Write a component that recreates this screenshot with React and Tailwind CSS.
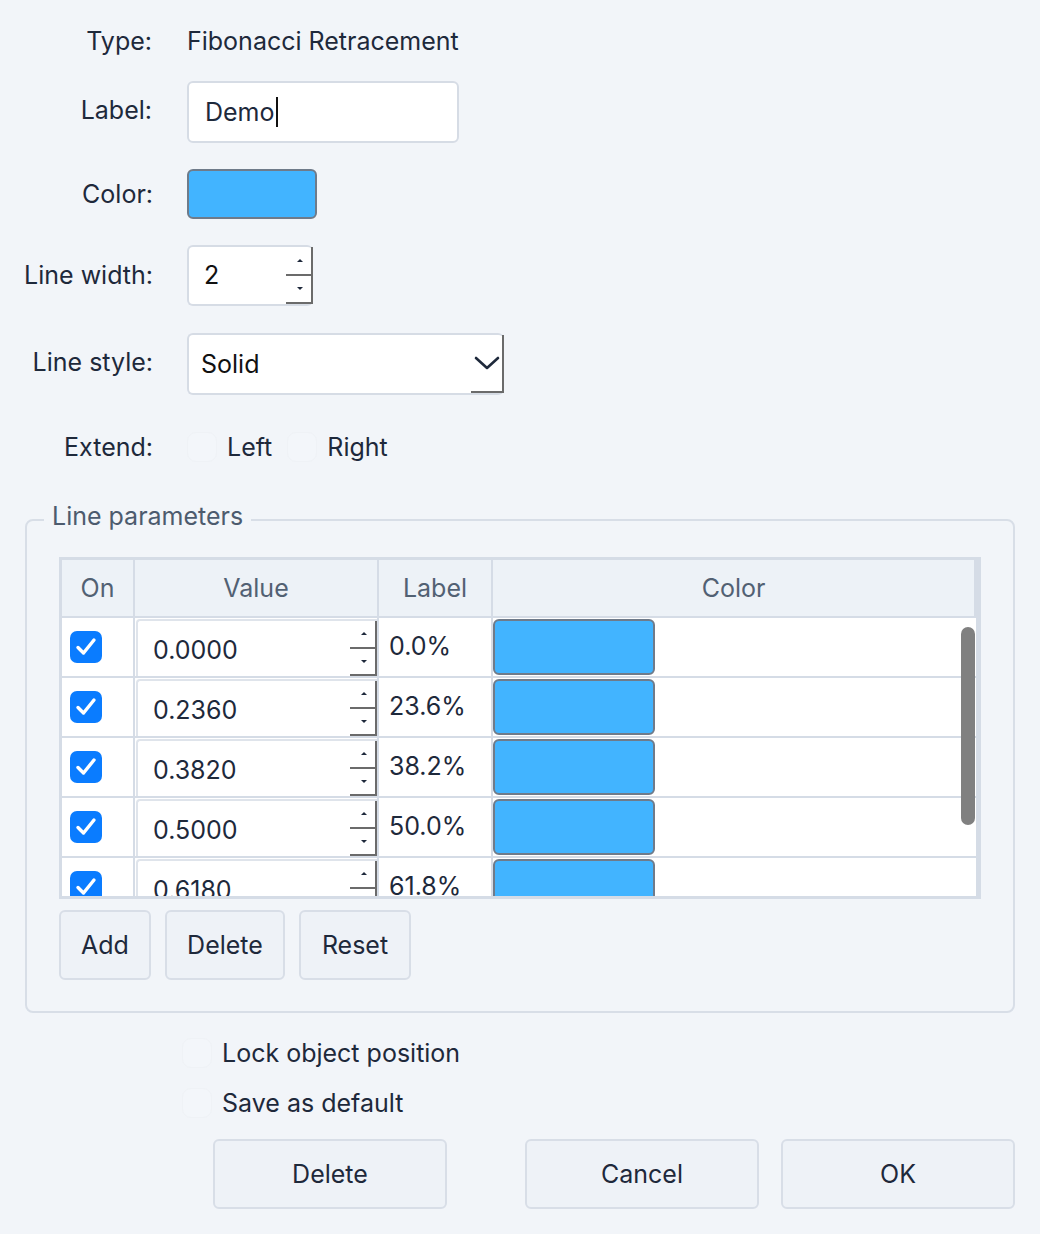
import React from "react";

function Arrow({ up }) {
  return up ? (
    <div className="h-0 w-0 border-x-[3px] border-b-[3px] border-x-transparent border-b-[#1e293b]" />
  ) : (
    <div className="h-0 w-0 border-x-[3px] border-t-[3px] border-x-transparent border-t-[#1e293b]" />
  );
}

function Spinner() {
  return (
    <div className="flex w-[27px] flex-col self-stretch border-r-2 border-[#6b6b6b]">
      <div className="flex flex-1 items-center justify-center pl-[2px]">
        <Arrow up />
      </div>
      <div className="h-[2px] bg-[#6b6b6b]" />
      <div className="flex flex-1 items-center justify-center border-b-2 border-[#6b6b6b] pl-[2px]">
        <Arrow />
      </div>
    </div>
  );
}

function Check() {
  return (
    <div className="flex h-[32px] w-[32px] items-center justify-center rounded-[7px] bg-[#0a7cff]">
      <svg width="24" height="24" viewBox="0 0 24 24" fill="none">
        <path d="M4 12.5 L9.5 18 L20 5" stroke="white" strokeWidth="3.4" strokeLinecap="round" strokeLinejoin="round" />
      </svg>
    </div>
  );
}

function FaintBox() {
  return <div className="h-[30px] w-[30px] rounded-[9px] border border-[#eff2f6] bg-[#f3f6fa]" />;
}

const rows = [
  ["0.0000", "0.0%"],
  ["0.2360", "23.6%"],
  ["0.3820", "38.2%"],
  ["0.5000", "50.0%"],
  ["0.6180", "61.8%"],
];

function Btn({ children, className }) {
  return (
    <div
      className={
        "flex items-center justify-center rounded-[6px] border-2 border-[#d8dee7] bg-[#eef2f7] text-[25px] text-[#1e293b] " +
        className
      }
    >
      {children}
    </div>
  );
}

export default function App() {
  return (
    <div className="min-h-[1234px] w-[1040px] bg-[#f2f5f9] font-['Inter','Noto_Sans',sans-serif] text-[25px] leading-none text-[#1e293b]">
      <div className="flex flex-col pt-[10px]">
        {/* Type */}
        <div className="flex h-[62px] items-center">
          <div className="w-[152px] text-right">Type:</div>
          <div className="ml-[35px]">Fibonacci Retracement</div>
        </div>
        {/* Label */}
        <div className="mt-[9px] flex h-[62px] items-center">
          <div className="w-[152px] pb-[4px] text-right">Label:</div>
          <div className="ml-[35px] flex h-[62px] w-[272px] items-center rounded-[6px] border-2 border-[#d6dce5] bg-white pl-[16px]">
            <span>Demo</span>
            <span className="ml-[1px] h-[30px] w-[2px] bg-[#111]" />
          </div>
        </div>
        {/* Color */}
        <div className="mt-[26px] flex h-[50px] items-center">
          <div className="w-[153px] text-right">Color:</div>
          <div className="ml-[34px] h-[50px] w-[130px] rounded-[6px] border-2 border-[#6f7b8a] bg-[#42b4ff]" />
        </div>
        {/* Line width */}
        <div className="mt-[26px] flex h-[61px] items-center">
          <div className="w-[153px] text-right">Line width:</div>
          <div className="ml-[34px] flex h-[61px] w-[126px] items-stretch rounded-[6px] border-2 border-r-0 border-[#d6dce5] bg-white">
            <div className="flex flex-1 items-center pl-[15px] text-[#111]">2</div>
            <Spinner />
          </div>
        </div>
        {/* Line style */}
        <div className="mt-[27px] flex h-[62px] items-center">
          <div className="w-[153px] pb-[4px] text-right">Line style:</div>
          <div className="ml-[34px] flex h-[62px] w-[317px] items-stretch rounded-[6px] border-2 border-r-0 border-[#d6dce5] bg-white">
            <div className="flex flex-1 items-center pl-[12px] text-[#111]">Solid</div>
            <div className="flex w-[33px] items-center justify-center border-r-2 border-b-2 border-[#6b6b6b]">
              <svg width="26" height="16" viewBox="0 0 26 16" fill="none">
                <path d="M2 3 L13 13 L24 3" stroke="#1e293b" strokeWidth="2.6" strokeLinecap="round" strokeLinejoin="round" />
              </svg>
            </div>
          </div>
        </div>
        {/* Extend */}
        <div className="mt-[21px] flex h-[62px] items-center">
          <div className="w-[153px] text-right">Extend:</div>
          <div className="ml-[34px] flex items-center">
            <FaintBox />
            <span className="ml-[10px]">Left</span>
            <div className="ml-[15px]">
              <FaintBox />
            </div>
            <span className="ml-[10px]">Right</span>
          </div>
        </div>

        {/* Fieldset */}
        <div className="relative mx-[25px] mt-[41px] h-[494px] rounded-[8px] border-2 border-[#d8dee7] px-[32px] pt-[36px]">
          <div className="absolute left-[17px] top-[-17px] bg-[#f2f5f9] px-[8px] text-[25px] text-[#4d5b6e]">
            Line parameters
          </div>
          {/* Table */}
          <div className="w-[922px] border-[3px] border-[#d5dce6] bg-white">
            <div className="flex h-[58px] border-b-2 border-[#d5dce6] bg-[#edf2f7] text-[#526173]">
              <div className="flex w-[73px] items-center justify-center border-r-2 border-[#d5dce6]">On</div>
              <div className="flex w-[244px] items-center justify-center border-r-2 border-[#d5dce6]">Value</div>
              <div className="flex w-[114px] items-center justify-center border-r-2 border-[#d5dce6]">Label</div>
              <div className="flex flex-1 items-center justify-center border-r-[4px] border-[#d5dce6]">Color</div>
            </div>
            <div className="relative h-[278px] overflow-hidden">
              {rows.map(([v, l], i) => (
                <div key={i} className="flex h-[60px] border-b-2 border-[#d5dce6]">
                  <div className="flex w-[73px] items-center justify-start border-r-2 border-[#d5dce6] pl-[8px]">
                    <Check />
                  </div>
                  <div className="flex w-[244px] border-r-2 border-[#d5dce6] pl-[1px] pt-[1px]">
                    <div className="flex flex-1 items-stretch rounded-tl-[4px] border-t-2 border-l-2 border-[#dfe4eb] bg-white">
                      <div className="flex flex-1 items-center pl-[15px] pt-[4px]">{v}</div>
                      <Spinner />
                    </div>
                  </div>
                  <div className="flex w-[114px] items-center border-r-2 border-[#d5dce6] pl-[10px] pb-[2px]">{l}</div>
                  <div className="flex flex-1 items-center border-r-2 border-[#d5dce6]">
                    <div className="h-[56px] w-[162px] rounded-[6px] border-2 border-[#6f7b8a] bg-[#42b4ff]" />
                  </div>
                </div>
              ))}
              <div className="absolute right-[3px] top-[9px] h-[198px] w-[14px] rounded-full bg-[#808080]" />
            </div>
          </div>
          {/* Buttons */}
          <div className="mt-[11px] flex gap-[14px]">
            <Btn className="h-[70px] w-[92px]">Add</Btn>
            <Btn className="h-[70px] w-[120px]">Delete</Btn>
            <Btn className="h-[70px] w-[112px]">Reset</Btn>
          </div>
        </div>

        {/* Lock / Save */}
        <div className="mt-[20px] flex h-[40px] items-center pl-[182px]">
          <FaintBox />
          <span className="ml-[10px]">Lock object position</span>
        </div>
        <div className="mt-[10px] flex h-[40px] items-center pl-[182px]">
          <FaintBox />
          <span className="ml-[10px]">Save as default</span>
        </div>

        {/* Bottom buttons */}
        <div className="mt-[16px] flex pl-[213px]">
          <Btn className="h-[70px] w-[234px]">Delete</Btn>
          <Btn className="ml-[78px] h-[70px] w-[234px]">Cancel</Btn>
          <Btn className="ml-[22px] h-[70px] w-[234px]">OK</Btn>
        </div>
      </div>
    </div>
  );
}
